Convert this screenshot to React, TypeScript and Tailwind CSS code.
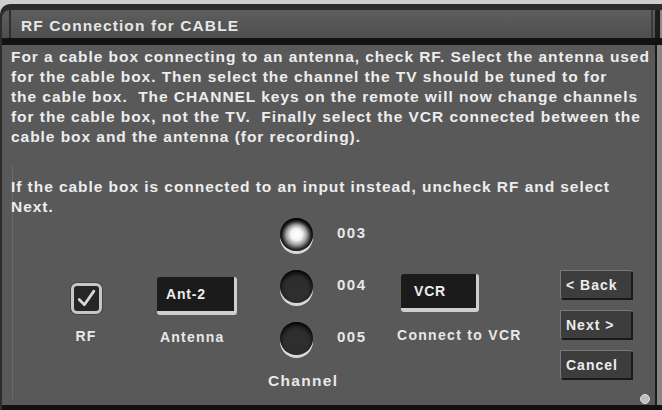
import React from 'react';

const intro = [
  'For a cable box connecting to an antenna, check RF. Select the antenna used',
  'for the cable box. Then select the channel the TV should be tuned to for',
  'the cable box.  The CHANNEL keys on the remote will now change channels',
  'for the cable box, not the TV.  Finally select the VCR connected between the',
  'cable box and the antenna (for recording).',
];

const fallback = [
  'If the cable box is connected to an input instead, uncheck RF and select',
  'Next.',
];

const channels = [
  { num: '003', selected: true },
  { num: '004', selected: false },
  { num: '005', selected: false },
];

function Radio({ selected }: { selected: boolean }) {
  return (
    <div
      className={
        'w-[33px] h-[33px] rounded-full shadow-[inset_0_3px_5px_#000,0_3px_0_#d8d8d8] ' +
        (selected
          ? 'bg-[radial-gradient(circle,#ffffff_0%,#f4f4f4_24%,#a0a0a0_44%,#2a2a2a_64%,#1a1a1a_100%)]'
          : 'bg-[#2e2e2e]')
      }
    />
  );
}

function Button({ label }: { label: string }) {
  return (
    <button className="w-[71px] h-[28px] bg-[#3d3d3d] border-t border-l border-[#7a7a7a] shadow-[2px_2px_0_#1a1a1a] text-[14px] font-bold tracking-[1px] text-[#ececec] text-left pl-[5px] leading-[26px]">
      {label}
    </button>
  );
}

export default function App() {
  return (
    <div
      className="w-[662px] h-[410px] bg-[#cfcfcf] pt-[4px] overflow-hidden"
      style={{ fontFamily: '"Liberation Sans", Arial, sans-serif' }}
    >
      <div className="h-[406px] flex flex-col bg-[#2c2c2c] rounded-tl-[10px] pt-[6px] pl-[2px]">
        {/* title bar */}
        <div className="h-[28px] flex bg-gradient-to-b from-[#5e5e5e] to-[#4e4e4e] rounded-tl-[8px]">
          <div className="w-[9px] border-r-2 border-[#2e2e2e]" />
          <div className="flex-1 pl-[10px] text-[15.5px] font-bold tracking-[1.1px] text-[#e6e6e6] leading-[31px]">
            RF Connection for CABLE
          </div>
          <div className="w-[4px] border-l-2 border-[#3a3a3a]" />
          <div className="w-[5px] bg-[#1c1c1c]" />
          <div className="w-[2px] bg-[#8a8a8a]" />
        </div>
        <div className="h-[7px] bg-[#121212]" />

        {/* body */}
        <div className="flex-1 flex">
          <div className="relative flex-1 flex flex-col bg-[#595959] pl-[9px] pt-[2px]">
            <div className="absolute left-[10px] top-[120px] bottom-[6px] w-px bg-[#6a6a6a]" />
            <div className="relative text-[15.5px] font-bold tracking-[0.95px] text-[#ededed] leading-[20px]">
              {intro.map((l, i) => (
                <div key={i} className="whitespace-pre">{l}</div>
              ))}
              <div className="h-[30px]" />
              {fallback.map((l, i) => (
                <div key={i} className="whitespace-pre">{l}</div>
              ))}
            </div>

            {/* controls */}
            <div className="relative flex items-start font-bold text-[#e8e8e8]">
              <div className="ml-[57px] w-[36px] mt-[66px] flex flex-col items-center">
                <div className="w-[31px] h-[31px] rounded-[6px] border-[3px] border-[#c6c6c6] bg-[#262626] shadow-[0_0_0_1px_#444] flex items-center justify-center">
                  <svg width="21" height="21" viewBox="0 0 20 20">
                    <path d="M3 11 L8 16 L17 3" fill="none" stroke="#d8d8d8" strokeWidth="2.6" strokeLinecap="round" strokeLinejoin="round" />
                  </svg>
                </div>
                <div className="mt-[13px] leading-[18px] text-[14px] tracking-[1.2px]">RF</div>
              </div>

              <div className="ml-[53px] w-[90px] mt-[60px] flex flex-col items-start">
                <div className="w-[80px] h-[38px] bg-[#1b1b1b] rounded-[3px] border-b-[4px] border-r-[3px] border-[#cfcfcf] pl-[9px] flex items-center text-[14px] tracking-[0.8px] text-[#ececec]">
                  Ant-2
                </div>
                <div className="ml-[3px] mt-[13px] leading-[18px] text-[14px] tracking-[1.2px]">Antenna</div>
              </div>

              <div className="ml-[21px] w-[110px] mt-[1px] flex flex-col items-start">
                <div className="ml-[12px] flex flex-col gap-[19px]">
                  {channels.map(c => (
                    <div key={c.num} className="flex items-center gap-[24px]">
                      <Radio selected={c.selected} />
                      <span className="text-[15px] tracking-[1.5px] -mt-[3px]">{c.num}</span>
                    </div>
                  ))}
                </div>
                <div className="mt-[17px] text-[15.5px] tracking-[1.3px] leading-[18px]">Channel</div>
              </div>

              <div className="ml-[19px] w-[130px] mt-[57px] flex flex-col items-start">
                <div className="ml-[4px] w-[78px] h-[38px] bg-[#1b1b1b] rounded-[3px] border-b-[4px] border-r-[3px] border-[#cfcfcf] pl-[13px] flex items-center text-[14px] tracking-[0.8px] text-[#ececec]">
                  VCR
                </div>
                <div className="mt-[14px] leading-[18px] text-[14px] tracking-[1.3px]">Connect to VCR</div>
              </div>

              <div className="ml-[33px] mt-[53px] flex flex-col gap-[12px]">
                <Button label="< Back" />
                <Button label="Next >" />
                <Button label="Cancel" />
              </div>
            </div>

            <div className="absolute right-[5px] bottom-[1px] w-[10px] h-[10px] rounded-full bg-[#bdbdbd] border border-[#e0e0e0]" />
          </div>
          <div className="w-[2px] bg-[#1c1c1c]" />
          <div className="w-[5px] bg-[#858585]" />
        </div>
        <div className="h-[5px] bg-[#111111]" />
      </div>
    </div>
  );
}
